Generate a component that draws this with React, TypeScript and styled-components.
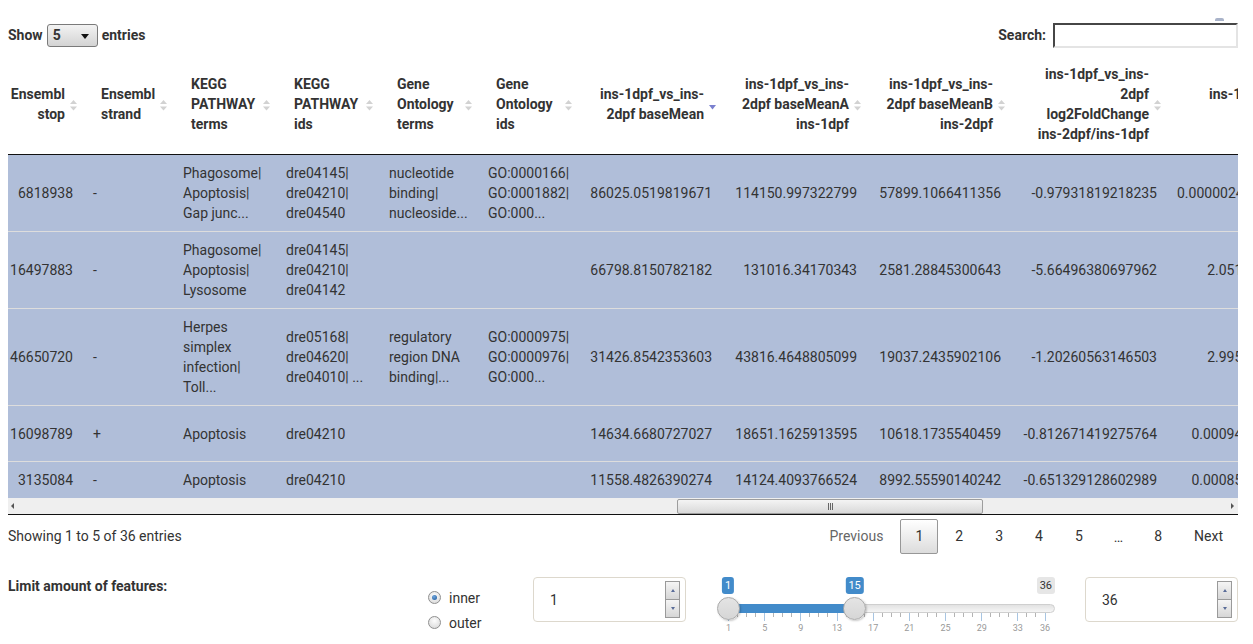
import React from "react";
import styled, { createGlobalStyle, css } from "styled-components";

const GlobalStyle = createGlobalStyle`
  html, body { margin: 0; padding: 0; background: #fff; }
  body {
    font-family: Roboto, "Liberation Sans", Arial, sans-serif;
    font-size: 14px;
    color: #333;
    overflow: hidden;
  }
  * { box-sizing: border-box; }
`;

const Page = styled.div`
  width: 1238px;
  padding: 22px 0 0 8px;
`;

/* ---------- top controls ---------- */
const TopBar = styled.div`
  display: flex;
  justify-content: space-between;
  align-items: center;
  height: 26px;
  margin-bottom: 6px;
`;

const LengthControl = styled.label`
  display: flex;
  align-items: center;
  gap: 4px;
  font-weight: 700;
`;

const FakeSelect = styled.div`
  position: relative;
  width: 51px;
  height: 23px;
  border: 1px solid #7a7a7a;
  border-radius: 3px;
  background: linear-gradient(#f3f3f3, #d3d3d3);
  padding-left: 5px;
  display: flex;
  align-items: center;
  font-weight: 700;
  &::after {
    content: "";
    position: absolute;
    right: 8px;
    top: 9px;
    border-left: 4px solid transparent;
    border-right: 4px solid transparent;
    border-top: 5px solid #111;
  }
`;

const SearchControl = styled.label`
  position: relative;
  display: flex;
  align-items: center;
  gap: 7px;
  font-weight: 700;
  &::after {
    content: "";
    position: absolute;
    right: 14px;
    top: -5px;
    width: 9px;
    height: 3px;
    border-radius: 2px 2px 0 0;
    background: #a9b3c9;
  }
`;

const SearchInput = styled.div`
  width: 185px;
  height: 25px;
  border: 2px inset #e4e4e4;
  border-top-color: #9a9a9a;
  border-left-color: #9a9a9a;
  background: #fff;
`;

/* ---------- table ---------- */
const ScrollWindow = styled.div`
  width: 1230px;
  overflow: hidden;
`;

const Table = styled.table<{ $offset: number; $width: number }>`
  border-collapse: separate;
  border-spacing: 0;
  table-layout: fixed;
  width: ${(p) => p.$width}px;
  margin-left: ${(p) => -p.$offset}px;
`;

const Th = styled.th<{ $right?: boolean }>`
  position: relative;
  padding: 10px 18px;
  font-weight: 700;
  line-height: 20px;
  text-align: ${(p) => (p.$right ? "right" : "left")};
  vertical-align: middle;
  border-bottom: 1px solid #111;
  white-space: nowrap;
  color: #333;
`;

const SortIcon = styled.svg`
  position: absolute;
  right: 0;
  top: 50%;
  margin-top: -9px;
  width: 19px;
  height: 19px;
`;

const Tr = styled.tr<{ $h?: number }>`
  &:first-child td { border-top: none; }
  ${(p) =>
    p.$h &&
    css`
      td { height: ${p.$h}px; }
    `}
`;

const Td = styled.td<{ $right?: boolean }>`
  padding: 8px 10px;
  line-height: 20px;
  text-align: ${(p) => (p.$right ? "right" : "left")};
  vertical-align: middle;
  white-space: nowrap;
  overflow: hidden;
  background: #b0bed9;
  border-top: 1px solid #dddddd;
  color: #333;
`;

const HScroll = styled.div`
  position: relative;
  height: 17px;
  background: #efefef;
  border-bottom: 1px solid #111;
`;

const ScrollArrow = styled.span<{ $dir: "left" | "right" }>`
  position: absolute;
  top: 5px;
  ${(p) => (p.$dir === "left" ? "left: 3px;" : "right: 4px;")}
  border-top: 3px solid transparent;
  border-bottom: 3px solid transparent;
  ${(p) =>
    p.$dir === "left"
      ? "border-right: 3px solid #555;"
      : "border-left: 3px solid #555;"}
`;

const ScrollThumb = styled.div`
  position: absolute;
  top: 1px;
  height: 15px;
  border: 1px solid #9d9d9d;
  border-radius: 2px;
  background: linear-gradient(#f4f4f4, #d9d9d9);
  display: flex;
  align-items: center;
  justify-content: center;
  gap: 1px;
`;

const Grip = styled.span`
  width: 1px;
  height: 7px;
  background: #666;
`;

/* ---------- footer ---------- */
const Footer = styled.div`
  display: flex;
  justify-content: space-between;
  align-items: flex-start;
`;

const Info = styled.div`
  padding-top: 11px;
  line-height: 20px;
`;

const Paginate = styled.div`
  display: flex;
  align-items: center;
  padding-top: 4px;
`;

const PageBtn = styled.span<{ $current?: boolean; $disabled?: boolean }>`
  display: inline-block;
  padding: 7px 14px;
  margin-left: 2px;
  line-height: 19px;
  text-align: center;
  border: 1px solid transparent;
  border-radius: 2px;
  color: ${(p) => (p.$disabled ? "#666" : "#333")};
  ${(p) =>
    p.$current &&
    css`
      border-color: #979797;
      background: linear-gradient(to bottom, #fff 0%, #dcdcdc 100%);
    `}
`;

const Ellipsis = styled.span`
  padding: 0 14px;
  margin-left: 2px;
  color: #333;
`;

/* ---------- bottom controls ---------- */
const Controls = styled.div`
  display: grid;
  grid-template-columns: 420px 105px 153px 32px 337px 30px 153px;
  margin-top: 21px;
`;

const ControlLabel = styled.div`
  font-weight: 700;
  line-height: 20px;
  padding-top: 1px;
`;

const RadioGroup = styled.div`
  padding-top: 10px;
`;

const RadioOption = styled.div`
  display: flex;
  align-items: center;
  gap: 8px;
  height: 25px;
  color: #333;
`;

const RadioDot = styled.span<{ $checked?: boolean }>`
  position: relative;
  width: 13px;
  height: 13px;
  border-radius: 50%;
  border: 1px solid #8f8f8f;
  background: radial-gradient(circle at 50% 35%, #fdfdfd, #d5d5d5);
  ${(p) =>
    p.$checked &&
    css`
      &::after {
        content: "";
        position: absolute;
        left: 3px;
        top: 3px;
        width: 5px;
        height: 5px;
        border-radius: 50%;
        background: radial-gradient(circle at 40% 35%, #6fa6dd, #1a5598);
      }
    `}
`;

const NumBox = styled.div`
  position: relative;
  height: 45px;
  margin-top: 2px;
  border: 1px solid #ddd8cd;
  border-radius: 4px;
  padding: 0 16px;
  display: flex;
  align-items: center;
  font-size: 14px;
  color: #333;
`;

const Spinner = styled.div`
  position: absolute;
  right: 5px;
  top: 3px;
  width: 15px;
  height: 37px;
  display: flex;
  flex-direction: column;
  border: 1px solid #9a9a9a;
`;

const SpinBtn = styled.span<{ $up?: boolean }>`
  flex: 1;
  display: flex;
  align-items: center;
  justify-content: center;
  background: linear-gradient(#f5f5f5, #d6d6d6);
  & + & { border-top: 1px solid #9a9a9a; }
  &::after {
    content: "";
    border-left: 2.5px solid transparent;
    border-right: 2.5px solid transparent;
    ${(p) =>
      p.$up
        ? "border-bottom: 3px solid #5a6c98;"
        : "border-top: 3px solid #5a6c98;"}
  }
`;

const Slider = styled.div`
  position: relative;
  height: 62px;
`;

const Track = styled.div`
  position: absolute;
  left: 1px;
  right: 0;
  top: 29px;
  height: 9px;
  border-radius: 5px;
  border: 1px solid #cfcfcf;
  background: linear-gradient(#e2e2e2, #f6f6f6);
`;

const Bar = styled.div`
  position: absolute;
  top: 29px;
  height: 9px;
  background: #428bca;
`;

const Handle = styled.div`
  position: absolute;
  top: 22px;
  width: 23px;
  height: 23px;
  margin-left: -11.5px;
  border-radius: 50%;
  border: 1px solid #a9a9a9;
  background: linear-gradient(#e4e4e4, #d6d6d6);
  box-shadow: 1px 1px 2px rgba(0, 0, 0, 0.2);
`;

const Tag = styled.div<{ $muted?: boolean }>`
  position: absolute;
  top: 2px;
  height: 17px;
  padding: 0 3px;
  border-radius: 3px;
  font-size: 11px;
  line-height: 17px;
  background: ${(p) => (p.$muted ? "#e6e6e6" : "#428bca")};
  color: ${(p) => (p.$muted ? "#333" : "#fff")};
`;

const Tick = styled.span<{ $major?: boolean }>`
  position: absolute;
  top: 38px;
  width: 1px;
  height: ${(p) => (p.$major ? 8 : 4)}px;
  background: ${(p) => (p.$major ? "#a8c5e2" : "#b4b4b4")};
`;

const TickLabel = styled.span`
  position: absolute;
  top: 48px;
  font-size: 9px;
  line-height: 11px;
  color: #999;
  transform: translateX(-50%);
`;

/* ---------- data ---------- */
type Col = { width: number; head: string[]; right?: boolean; sort?: "both" | "desc" };

const columns: Col[] = [
  { width: 100, head: ["Ensembl", "stop"], right: true, sort: "both" },
  { width: 90, head: ["Ensembl", "strand"], sort: "both" },
  { width: 103, head: ["KEGG", "PATHWAY", "terms"], sort: "both" },
  { width: 103, head: ["KEGG", "PATHWAY", "ids"], sort: "both" },
  { width: 99, head: ["Gene", "Ontology", "terms"], sort: "both" },
  { width: 100, head: ["Gene", "Ontology", "ids"], sort: "both" },
  { width: 144, head: ["ins-1dpf_vs_ins-", "2dpf baseMean"], right: true, sort: "desc" },
  { width: 145, head: ["ins-1dpf_vs_ins-", "2dpf baseMeanA", "ins-1dpf"], right: true, sort: "both" },
  { width: 144, head: ["ins-1dpf_vs_ins-", "2dpf baseMeanB", "ins-2dpf"], right: true, sort: "both" },
  { width: 156, head: ["ins-1dpf_vs_ins-", "2dpf", "log2FoldChange", "ins-2dpf/ins-1dpf"], right: true, sort: "both" },
  { width: 164, head: ["ins-1dpf_vs_ins-", "2dpf pvalue"], right: true, sort: "both" },
  { width: 150, head: ["ins-1dpf_vs_ins-", "2dpf padj"], right: true, sort: "both" },
];

type Cell = string | string[];
type Row = { cells: Cell[]; h?: number };

const rows: Row[] = [
  {
    cells: [
      "6818938", "-",
      ["Phagosome|", "Apoptosis|", "Gap junc..."],
      ["dre04145|", "dre04210|", "dre04540"],
      ["nucleotide", "binding|", "nucleoside..."],
      ["GO:0000166|", "GO:0001882|", "GO:000..."],
      "86025.0519819671", "114150.997322799", "57899.1066411356", "-0.97931819218235",
      "0.00000249618562301", "0.0000412",
    ],
  },
  {
    cells: [
      "16497883", "-",
      ["Phagosome|", "Apoptosis|", "Lysosome"],
      ["dre04145|", "dre04210|", "dre04142"],
      "", "",
      "66798.8150782182", "131016.34170343", "2581.28845300643", "-5.66496380697962",
      "2.0517235681903", "1.2e-09",
    ],
  },
  {
    cells: [
      "46650720", "-",
      ["Herpes", "simplex", "infection|", "Toll..."],
      ["dre05168|", "dre04620|", "dre04010| ..."],
      ["regulatory", "region DNA", "binding|..."],
      ["GO:0000975|", "GO:0000976|", "GO:000..."],
      "31426.8542353603", "43816.4648805099", "19037.2435902106", "-1.20260563146503",
      "2.9951204583614", "0.00031",
    ],
  },
  {
    h: 56,
    cells: [
      "16098789", "+", ["Apoptosis"], ["dre04210"], "", "",
      "14634.6680727027", "18651.1625913595", "10618.1735540459", "-0.812671419275764",
      "0.000945837261953", "0.0043",
    ],
  },
  {
    cells: [
      "3135084", "-", ["Apoptosis"], ["dre04210"], "", "",
      "11558.4826390274", "14124.4093766524", "8992.55590140242", "-0.651329128602989",
      "0.000853612047985", "0.0039",
    ],
  },
];

const tableWidth = columns.reduce((s, c) => s + c.width, 0);

function SortBoth() {
  return (
    <SortIcon viewBox="0 0 19 19">
      <path d="M6 9 L9.5 5 L13 9 Z" fill="#d2d2d2" />
      <path d="M6 11.5 L9.5 15.5 L13 11.5 Z" fill="#d2d2d2" />
    </SortIcon>
  );
}

function SortDesc() {
  return (
    <SortIcon viewBox="0 0 19 19">
      <path d="M6 10 L9.5 14.5 L13 10 Z" fill="#7a80cf" />
    </SortIcon>
  );
}

function Lines({ value }: { value: Cell }) {
  if (typeof value === "string") return <>{value}</>;
  return (
    <>
      {value.map((l, i) => (
        <React.Fragment key={i}>
          {i > 0 && <br />}
          {l}
        </React.Fragment>
      ))}
    </>
  );
}

/* slider geometry */
const sMin = 1;
const sMax = 36;
const sLeft = 10;
const sRight = 326.5;
const pos = (v: number) => sLeft + ((v - sMin) / (sMax - sMin)) * (sRight - sLeft);
const majors = [1, 5, 9, 13, 17, 21, 25, 29, 33, 36];

function RangeSlider({ from, to }: { from: number; to: number }) {
  const ticks = [];
  for (let v = sMin; v <= sMax; v++) ticks.push(v);
  return (
    <Slider>
      <Track />
      <Bar style={{ left: pos(from), width: pos(to) - pos(from) }} />
      {ticks.map((v) => (
        <Tick key={v} $major={majors.includes(v)} style={{ left: Math.round(pos(v)) }} />
      ))}
      {majors.map((v) => (
        <TickLabel key={v} style={{ left: pos(v) + 0.5 }}>
          {v}
        </TickLabel>
      ))}
      <Handle style={{ left: pos(from) }} />
      <Handle style={{ left: pos(to) }} />
      <Tag style={{ left: pos(from), transform: "translateX(-50%)" }}>{from}</Tag>
      <Tag style={{ left: pos(to), transform: "translateX(-50%)" }}>{to}</Tag>
      <Tag $muted style={{ right: 0 }}>{sMax}</Tag>
    </Slider>
  );
}

function NumberInput({ value }: { value: string }) {
  return (
    <NumBox>
      {value}
      <Spinner>
        <SpinBtn $up />
        <SpinBtn />
      </Spinner>
    </NumBox>
  );
}

export default function App() {
  return (
    <>
      <GlobalStyle />
      <Page>
        <TopBar>
          <LengthControl>
            Show <FakeSelect>5</FakeSelect> entries
          </LengthControl>
          <SearchControl>
            Search:
            <SearchInput />
          </SearchControl>
        </TopBar>

        <ScrollWindow>
          <Table $offset={25} $width={tableWidth}>
            <colgroup>
              {columns.map((c, i) => (
                <col key={i} style={{ width: c.width }} />
              ))}
            </colgroup>
            <thead>
              <tr>
                {columns.map((c, i) => (
                  <Th key={i} $right={c.right}>
                    <Lines value={c.head} />
                    {c.sort === "desc" ? <SortDesc /> : <SortBoth />}
                  </Th>
                ))}
              </tr>
            </thead>
            <tbody>
              {rows.map((r, ri) => (
                <Tr key={ri} $h={r.h}>
                  {r.cells.map((cell, ci) => (
                    <Td key={ci} $right={columns[ci].right}>
                      <Lines value={cell} />
                    </Td>
                  ))}
                </Tr>
              ))}
            </tbody>
          </Table>
        </ScrollWindow>

        <HScroll>
          <ScrollArrow $dir="left" />
          <ScrollThumb style={{ left: 669, width: 306 }}>
            <Grip />
            <Grip />
            <Grip />
          </ScrollThumb>
          <ScrollArrow $dir="right" />
        </HScroll>

        <Footer>
          <Info>Showing 1 to 5 of 36 entries</Info>
          <Paginate>
            <PageBtn $disabled>Previous</PageBtn>
            <PageBtn $current>1</PageBtn>
            <PageBtn>2</PageBtn>
            <PageBtn>3</PageBtn>
            <PageBtn>4</PageBtn>
            <PageBtn>5</PageBtn>
            <Ellipsis>…</Ellipsis>
            <PageBtn>8</PageBtn>
            <PageBtn>Next</PageBtn>
          </Paginate>
        </Footer>

        <Controls>
          <ControlLabel>Limit amount of features:</ControlLabel>
          <RadioGroup>
            <RadioOption>
              <RadioDot $checked />
              inner
            </RadioOption>
            <RadioOption>
              <RadioDot />
              outer
            </RadioOption>
          </RadioGroup>
          <NumberInput value="1" />
          <span />
          <RangeSlider from={1} to={15} />
          <span />
          <NumberInput value="36" />
        </Controls>
      </Page>
    </>
  );
}
